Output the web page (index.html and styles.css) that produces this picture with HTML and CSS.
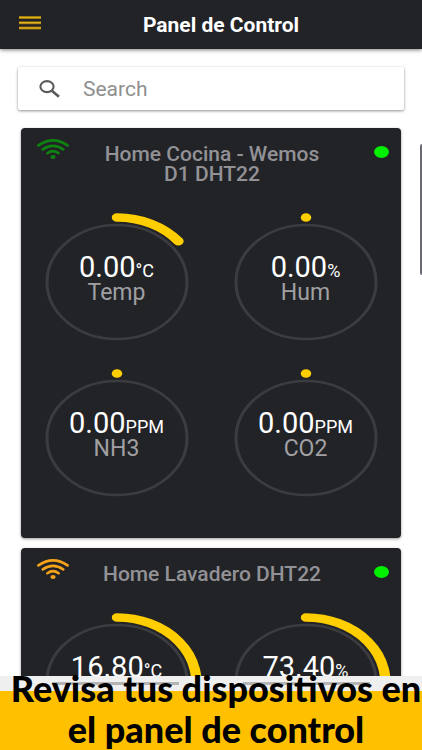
FILE: index.html
```html
<!DOCTYPE html>
<html lang="es">
<head>
    <meta charset="UTF-8">
    <meta name="viewport" content="width=device-width, initial-scale=1.0">
    <title>Panel de Control</title>
    <link rel="stylesheet" href="styles.css">
</head>
<body>
    <header class="toolbar">
        <button class="menu-button" type="button" aria-label="Menu">
            <svg width="22" height="14" viewBox="0 0 22 14">
                <path d="M0 1.5h22M0 6.8h22M0 12h22" stroke="#8a6a0c" stroke-width="3"/>
                <path d="M0 1.5h22M0 6.8h22M0 12h22" stroke="#e3b21c" stroke-width="1.6"/>
            </svg>
        </button>
        <h1>Panel de Control</h1>
    </header>

    <main class="content">
        <label class="searchbar">
            <svg width="22" height="18" viewBox="0 0 22 18" fill="none" stroke="#5b5b5b">
                <ellipse cx="8" cy="6.6" rx="6.6" ry="5.5" stroke-width="2.1"/>
                <path d="M12.8 10.8L20 16.8" stroke-width="2.7"/>
            </svg>
            <input type="search" placeholder="Search" aria-label="Search">
        </label>

        <section class="card">
            <div class="card-header">
                <svg class="wifi wifi-good" viewBox="0 0 32 21">
                    <path d="M1.4 6.4Q16 -3.6 30.6 6.4M5.8 10.4Q16 3.4 26.2 10.4M10.4 14.2Q16 10.2 21.6 14.2"/>
                    <ellipse cx="16" cy="18" rx="2.6" ry="2.1"/>
                </svg>
                <h2>Home Cocina - Wemos D1 DHT22</h2>
                <span class="status"></span>
            </div>
            <div class="gauges">
                <div class="gauge">
                    <svg class="dial" viewBox="0 0 140 140" preserveAspectRatio="none">
                        <circle class="ring" cx="70" cy="70" r="57"/>
                        <path class="arc" d="M70 5.5A64.5 64.5 0 0 1 120 29.3"/>
                    </svg>
                    <div class="reading">
                        <p class="value">0.00<small>°C</small></p>
                        <p class="name">Temp</p>
                    </div>
                </div>
                <div class="gauge">
                    <svg class="dial" viewBox="0 0 140 140" preserveAspectRatio="none">
                        <circle class="ring" cx="70" cy="70" r="57"/>
                        <path class="arc" d="M70 5.5h.01"/>
                    </svg>
                    <div class="reading">
                        <p class="value">0.00<small>%</small></p>
                        <p class="name">Hum</p>
                    </div>
                </div>
                <div class="gauge">
                    <svg class="dial" viewBox="0 0 140 140" preserveAspectRatio="none">
                        <circle class="ring" cx="70" cy="70" r="57"/>
                        <path class="arc" d="M70 5.5h.01"/>
                    </svg>
                    <div class="reading">
                        <p class="value">0.00<small>PPM</small></p>
                        <p class="name">NH3</p>
                    </div>
                </div>
                <div class="gauge">
                    <svg class="dial" viewBox="0 0 140 140" preserveAspectRatio="none">
                        <circle class="ring" cx="70" cy="70" r="57"/>
                        <path class="arc" d="M70 5.5h.01"/>
                    </svg>
                    <div class="reading">
                        <p class="value">0.00<small>PPM</small></p>
                        <p class="name">CO2</p>
                    </div>
                </div>
            </div>
        </section>

        <section class="card">
            <div class="card-header">
                <svg class="wifi wifi-weak" viewBox="0 0 32 21">
                    <path d="M1.4 6.4Q16 -3.6 30.6 6.4M5.8 10.4Q16 3.4 26.2 10.4M10.4 14.2Q16 10.2 21.6 14.2"/>
                    <ellipse cx="16" cy="18" rx="2.6" ry="2.1"/>
                </svg>
                <h2>Home Lavadero DHT22</h2>
                <span class="status"></span>
            </div>
            <div class="gauges">
                <div class="gauge">
                    <svg class="dial" viewBox="0 0 140 140" preserveAspectRatio="none">
                        <circle class="ring" cx="70" cy="70" r="57"/>
                        <path class="arc" d="M70 5.5A64.5 64.5 0 0 1 133 84"/>
                    </svg>
                    <div class="reading">
                        <p class="value">16.80<small>°C</small></p>
                    </div>
                </div>
                <div class="gauge">
                    <svg class="dial" viewBox="0 0 140 140" preserveAspectRatio="none">
                        <circle class="ring" cx="70" cy="70" r="57"/>
                        <path class="arc" d="M70 5.5A64.5 64.5 0 0 1 133 84"/>
                    </svg>
                    <div class="reading">
                        <p class="value">73.40<small>%</small></p>
                    </div>
                </div>
            </div>
        </section>
    </main>

    <div class="scroll-thumb"></div>

    <footer class="caption">
        <div class="nav-strip"><span></span><span></span></div>
        <p>Revisa tus dispositivos en<br>el panel de control</p>
    </footer>
</body>
</html>
```
FILE: styles.css
```css
* { margin: 0; padding: 0; box-sizing: border-box; }
body {
    height: 100vh;
    overflow: hidden;
    background: #fff;
    font-family: Roboto, "Liberation Sans", sans-serif;
    display: flex;
    flex-direction: column;
}
.toolbar {
    flex: none;
    height: 49px;
    display: grid;
    grid-template-columns: 60px 1fr 40px;
    align-items: center;
    background: #222327;
    box-shadow: 0 1px 4px rgba(0, 0, 0, 0.5);
}
.menu-button {
    padding: 0 0 4px 19px;
    border: none;
    background: none;
    text-align: left;
    cursor: pointer;
}
.menu-button svg { display: block; }
.toolbar h1 {
    color: #fff;
    font-size: 21px;
    font-weight: 700;
    text-align: center;
}
.content {
    flex: 1;
    min-height: 0;
    overflow: hidden;
    padding: 18px 18px 0;
}
.searchbar {
    display: flex;
    align-items: center;
    gap: 22px;
    height: 43px;
    padding: 0 21px;
    margin-bottom: 18px;
    border-radius: 2px;
    background: #fff;
    box-shadow: 0 1px 3px rgba(0, 0, 0, 0.45);
}
.searchbar input {
    flex: 1;
    min-width: 0;
    border: none;
    outline: none;
    background: none;
    font-family: inherit;
    font-size: 21px;
}
.searchbar input::placeholder { color: #8f8f8f; }
.card {
    margin: 0 3px 10px;
    padding: 16px 1px 22px;
    border-radius: 4px;
    background: #222327;
    box-shadow: 0 1px 3px rgba(0, 0, 0, 0.4);
}
.card-header {
    display: grid;
    grid-template-columns: 76px 1fr 74px;
    padding-bottom: 20px;
}
.card-header h2 {
    color: #929296;
    font-size: 21px;
    line-height: 20px;
    font-weight: 500;
    text-align: center;
}
.wifi {
    width: 32px;
    height: 21px;
    margin: -5px 0 0 15px;
    fill: none;
    stroke-width: 2.6;
    stroke-linecap: round;
}
.wifi-good { stroke: #0f8312; }
.wifi-weak { stroke: #f5a31a; }
.wifi ellipse { stroke: none; }
.wifi-good ellipse { fill: #0f8312; }
.wifi-weak ellipse { fill: #f5a31a; }
.status {
    justify-self: end;
    width: 15px;
    height: 12px;
    margin: 2px 11px 0 0;
    border-radius: 50%;
    background: #00f000;
}
.gauges {
    display: grid;
    grid-template-columns: 1fr 1fr;
}
.gauge {
    display: grid;
    height: 156px;
    place-items: center;
}
.dial, .reading { grid-area: 1 / 1; }
.dial {
    width: 172px;
    height: 140px;
    overflow: visible;
}
.ring {
    fill: none;
    stroke: #3b3c40;
    stroke-width: 2.5;
}
.arc {
    fill: none;
    stroke: #ffce00;
    stroke-width: 8.5;
    stroke-linecap: round;
}
.reading {
    align-self: start;
    padding-top: 50px;
    text-align: center;
}
.value {
    color: #fff;
    font-size: 29px;
    line-height: 27px;
}
.value small { font-size: 18px; }
.name {
    color: #a0a0a3;
    font-size: 23px;
    line-height: 18px;
}
.scroll-thumb {
    position: absolute;
    top: 144px;
    right: 0;
    width: 2px;
    height: 131px;
    border-radius: 2px 0 0 2px;
    background: #6c6977;
}
.caption {
    flex: none;
    background: #ffc000;
}
.nav-strip {
    display: flex;
    justify-content: space-between;
    height: 15px;
    padding: 6px 52px 0;
    background: #efefef;
}
.nav-strip span {
    width: 40%;
    height: 3px;
    background: #b4b4b4;
}
.caption p {
    margin-top: -23px;
    padding-left: 10px;
    color: #000;
    font-family: Lato, sans-serif;
    font-size: 36px;
    line-height: 41px;
    font-weight: 900;
    text-align: center;
    white-space: nowrap;
}
```
